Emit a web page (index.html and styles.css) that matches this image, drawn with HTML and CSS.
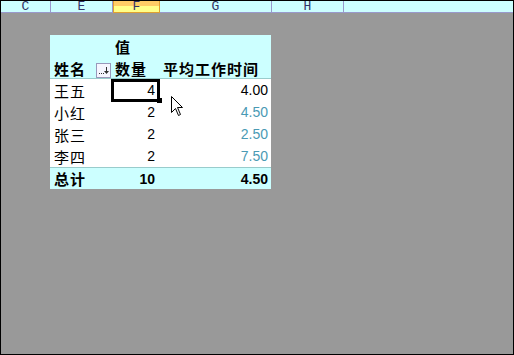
FILE: index.html
```html
<!DOCTYPE html>
<html>
<head>
<meta charset="utf-8">
<link rel="stylesheet" href="styles.css">
</head>
<body>
<div class="screen">
  <div class="colhead">
    <div class="ch w-c">C</div>
    <div class="ch w-e">E</div>
    <div class="ch w-f sel">F</div>
    <div class="ch w-g">G</div>
    <div class="ch w-h">H</div>
    <div class="ch rest"></div>
  </div>
  <div class="sheet">
    <div class="pivot">
      <div class="prow head1"><div class="cell"></div><div class="cell zh b">值</div><div class="cell"></div></div>
      <div class="prow head2">
        <div class="cell zh b namecell"><span>姓名</span>
          <span class="dd"><svg width="13" height="13" viewBox="0 0 13 13"><g fill="#333"><rect x="2" y="9" width="1" height="1"/><rect x="4" y="9" width="1" height="1"/><rect x="6" y="9" width="1" height="1"/><rect x="9" y="3" width="1" height="6"/><polygon points="7,7 12,7 9.5,10"/></g></svg></span>
        </div>
        <div class="cell zh b">数量</div>
        <div class="cell zh b">平均工作时间</div>
      </div>
      <div class="prow body"><div class="cell zh">王五</div><div class="cell num c2 active">4</div><div class="cell num c3">4.00</div></div>
      <div class="prow body"><div class="cell zh">小红</div><div class="cell num c2">2</div><div class="cell num c3 fade">4.50</div></div>
      <div class="prow body"><div class="cell zh">张三</div><div class="cell num c2">2</div><div class="cell num c3 fade">2.50</div></div>
      <div class="prow body"><div class="cell zh">李四</div><div class="cell num c2">2</div><div class="cell num c3 fade">7.50</div></div>
      <div class="prow total"><div class="cell zh b">总计</div><div class="cell num c2 b">10</div><div class="cell num c3 b">4.50</div></div>
    </div>
    <svg class="cursor" width="13" height="21" viewBox="0 0 13 21"><path d="M0.5,0.5 L0.5,16.5 L4.5,12.5 L7.5,19.5 L9.5,18.5 L6.5,11.5 L11.5,11.5 Z" fill="#fff" stroke="#000" stroke-width="1"/></svg>
  </div>
</div>
</body>
</html>
```

FILE: styles.css
```css
html, body {
  margin: 0;
  padding: 0;
}
.screen {
  width: 514px;
  height: 355px;
  box-sizing: border-box;
  border: 1px solid #000;
  display: flex;
  flex-direction: column;
  background: #999999;
  overflow: hidden;
}
.colhead {
  display: flex;
  height: 12px;
  box-sizing: border-box;
  background: #ccffff;
  border-bottom: 1px solid #9999cc;
  flex: none;
}
.ch {
  box-sizing: border-box;
  border-right: 1px solid #9999cc;
  font-family: "Liberation Mono", monospace;
  font-size: 13px;
  line-height: 11px;
  height: 11px;
  color: #333366;
  text-align: center;
}
.w-c { width: 50px; }
.w-e { width: 62px; }
.w-f { width: 47px; }
.w-g { width: 112px; }
.w-h { width: 72px; }
.rest { flex: 1; border-right: none; }
.sel {
  background: linear-gradient(#ffcc66 0, #ffcc66 50%, #ffff88 50%, #ffff88 100%);
  border: 1px solid #e0a030;
  border-top: none;
  height: 12px;
  margin-bottom: -1px;
}
.sheet {
  position: relative;
  flex: 1;
  padding: 22px 0 0 49px;
}
.pivot {
  width: 221px;
  display: flex;
  flex-direction: column;
}
.prow {
  display: grid;
  grid-template-columns: 61px 47px 113px;
}
.cell {
  display: flex;
  align-items: center;
  box-sizing: border-box;
  white-space: nowrap;
}
.zh {
  font-family: "Noto Sans CJK SC", sans-serif;
  font-size: 15px;
  letter-spacing: 1px;
  color: #000;
  padding-left: 4px;
}
.b { font-weight: bold; }
.head1 { height: 22px; background: #ccffff; }
.head2 {
  height: 22px;
  background: #ccffff;
  border-bottom: 1px solid #99cccc;
  box-sizing: border-box;
}
.head2 .cell { padding-top: 1px; }
.head2 .cell:nth-child(3) { padding-left: 5px; }
.namecell { padding-right: 0; }
.dd {
  margin-left: auto;
  width: 15px;
  height: 15px;
  box-sizing: border-box;
  border: 1px solid #9999bb;
  background: #f6f6ff;
  align-self: flex-end;
  margin-bottom: 1px;
  display: flex;
}
.dd svg { display: block; }
.body {
  height: 22px;
  background: #fff;
}
.total {
  height: 22px;
  background: #ccffff;
  border-top: 1px solid #99cccc;
  box-sizing: border-box;
}
.num {
  font-family: "Liberation Sans", Arial, sans-serif;
  font-size: 14px;
  color: #000;
  justify-content: flex-end;
}
.c2 { padding-right: 3px; }
.c3 { padding-right: 3px; }
.fade { color: #4a9ab4; }
.active { position: relative; }
.active::after {
  content: "";
  position: absolute;
  left: 0;
  top: 0;
  width: 49px;
  height: 23px;
  box-sizing: border-box;
  border: 3px solid #000;
}
.active::before {
  content: "";
  position: absolute;
  left: 46px;
  top: 19px;
  width: 5px;
  height: 5px;
  background: #000;
  z-index: 1;
}
.cursor {
  position: absolute;
  left: 170px;
  top: 83px;
}
```
